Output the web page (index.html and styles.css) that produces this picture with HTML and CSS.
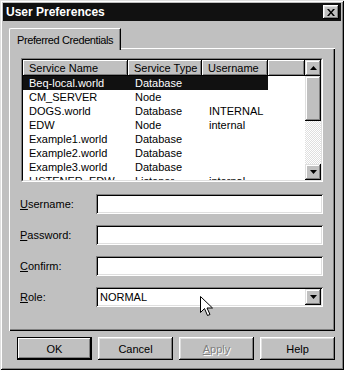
FILE: index.html
```html
<!DOCTYPE html>
<html lang="en">
  <head>
    <meta charset="UTF-8" />
    <title>User Preferences</title>
    <link rel="stylesheet" href="styles.css">
  </head>
  <body>
    <div class="window">
      <div class="titlebar">
        <span class="title">User Preferences</span>
        <button class="close-btn">
          <svg width="8" height="7" viewBox="0 0 8 7">
            <path d="M0 0h2l2 2.5L6 0h2L5 3.5 8 7H6L4 4.5 2 7H0l3-3.5z" fill="#000" />
          </svg>
        </button>
      </div>

      <div class="content">
        <div class="tabs">
          <div class="tab">Preferred Credentials</div>
        </div>

        <div class="panel">
          <div class="listbox">
            <div class="listbox-inner">
              <div class="list-main">
                <div class="list-header">
                  <div class="hcell col-name">Service Name</div>
                  <div class="hcell col-type">Service Type</div>
                  <div class="hcell col-user">Username</div>
                  <div class="hcell col-rest"></div>
                </div>
                <div class="list-rows">
                  <div class="row selected"><span class="col-name">Beq-local.world</span><span class="col-type">Database</span><span class="col-user"></span></div>
                  <div class="row"><span class="col-name">CM_SERVER</span><span class="col-type">Node</span><span class="col-user"></span></div>
                  <div class="row"><span class="col-name">DOGS.world</span><span class="col-type">Database</span><span class="col-user">INTERNAL</span></div>
                  <div class="row"><span class="col-name">EDW</span><span class="col-type">Node</span><span class="col-user">internal</span></div>
                  <div class="row"><span class="col-name">Example1.world</span><span class="col-type">Database</span><span class="col-user"></span></div>
                  <div class="row"><span class="col-name">Example2.world</span><span class="col-type">Database</span><span class="col-user"></span></div>
                  <div class="row"><span class="col-name">Example3.world</span><span class="col-type">Database</span><span class="col-user"></span></div>
                  <div class="row"><span class="col-name">LISTENER_EDW</span><span class="col-type">Listener</span><span class="col-user">internal</span></div>
                </div>
              </div>
              <div class="scrollbar">
                <div class="sb-btn">
                  <svg width="7" height="4" viewBox="0 0 7 4"><path d="M3.5 0L7 4H0z" fill="#000" /></svg>
                </div>
                <div class="sb-thumb"></div>
                <div class="sb-track"></div>
                <div class="sb-btn">
                  <svg width="7" height="4" viewBox="0 0 7 4"><path d="M0 0h7L3.5 4z" fill="#000" /></svg>
                </div>
              </div>
            </div>
          </div>

          <div class="form">
            <label class="field-label"><u>U</u>sername:</label>
            <div class="field"></div>
            <label class="field-label"><u>P</u>assword:</label>
            <div class="field"></div>
            <label class="field-label"><u>C</u>onfirm:</label>
            <div class="field"></div>
            <label class="field-label"><u>R</u>ole:</label>
            <div class="field combo">
              <span class="combo-value">NORMAL</span>
              <div class="combo-btn">
                <svg width="7" height="4" viewBox="0 0 7 4"><path d="M0 0h7L3.5 4z" fill="#000" /></svg>
              </div>
              <!-- mouse pointer over the combo -->
              <svg class="cursor" width="13" height="21" viewBox="0 0 13 21">
                <path d="M0.5 0.5v16l4-4 3 7 2.5-1-3-6.5h5.5z" fill="#fff" stroke="#000" stroke-width="1" />
              </svg>
            </div>
          </div>
        </div>

        <div class="buttons">
          <button class="btn default">OK</button>
          <button class="btn">Cancel</button>
          <button class="btn disabled"><u>A</u>pply</button>
          <button class="btn">Help</button>
        </div>
      </div>
    </div>
  </body>
</html>
```

FILE: styles.css
```css
body {
  margin: 0;
  padding: 0;
  background-color: #c0c0c0;
  font-family: "Liberation Sans", Arial, sans-serif;
  font-size: 11px;
  color: #000;
}
.window {
  width: 344px;
  height: 370px;
  box-sizing: border-box;
  padding: 3px;
  background-color: #c0c0c0;
  box-shadow: inset 1px 1px #dfdfdf, inset -1px -1px #000,
    inset 2px 2px #fff, inset -2px -2px #808080;
}
.titlebar {
  height: 18px;
  display: flex;
  align-items: center;
  justify-content: space-between;
  padding: 0 2px 0 3px;
  background-color: #111;
  color: #fff;
}
.title {
  font-weight: bold;
  font-size: 12px;
}
.close-btn {
  width: 16px;
  height: 14px;
  padding: 0;
  border: none;
  display: flex;
  align-items: center;
  justify-content: center;
  background-color: #c0c0c0;
  box-shadow: inset -1px -1px #000, inset 1px 1px #fff,
    inset -2px -2px #808080, inset 2px 2px #dfdfdf;
}
.content {
  padding: 7px 6px 0 6px;
}
.tabs {
  display: flex;
  position: relative;
  z-index: 1;
}
.tab {
  height: 22px;
  box-sizing: border-box;
  margin-bottom: -2px;
  padding: 5px 7px 0 7px;
  white-space: nowrap;
  letter-spacing: -0.4px;
  background-color: #c0c0c0;
  border-top: 1px solid #fff;
  border-left: 1px solid #fff;
  border-right: 1px solid #000;
  border-top-left-radius: 2px;
  box-shadow: inset -1px 0 #808080;
}
.panel {
  padding: 10px 12px 24px 12px;
  box-shadow: inset 1px 1px #fff, inset -1px -1px #000,
    inset -2px -2px #808080;
}
.listbox {
  height: 124px;
  box-sizing: border-box;
  border: 1px solid;
  border-color: #808080 #fff #fff #808080;
}
.listbox-inner {
  height: 100%;
  box-sizing: border-box;
  border: 1px solid;
  border-color: #000 #dfdfdf #dfdfdf #000;
  display: flex;
  background-color: #fff;
}
.list-main {
  flex: 1;
  display: flex;
  flex-direction: column;
  overflow: hidden;
}
.list-header {
  display: flex;
  height: 16px;
  flex-shrink: 0;
}
.hcell {
  box-sizing: border-box;
  padding: 2px 0 0 6px;
  background-color: #c0c0c0;
  box-shadow: inset -1px -1px #000, inset 1px 1px #fff,
    inset -2px -2px #808080;
  white-space: nowrap;
  overflow: hidden;
}
.col-name {
  width: 105px;
}
.col-type {
  width: 74px;
}
.col-user {
  width: 66px;
}
.col-rest {
  flex: 1;
}
.list-rows {
  flex: 1;
  overflow: hidden;
}
.row {
  display: flex;
  width: 245px;
  height: 14px;
  line-height: 14px;
  white-space: nowrap;
}
.row span {
  box-sizing: border-box;
  padding-left: 6px;
  overflow: hidden;
}
.row .col-type,
.row .col-user {
  padding-left: 7px;
}
.row.selected {
  background-color: #111;
  color: #fff;
}
.scrollbar {
  width: 16px;
  display: flex;
  flex-direction: column;
}
.sb-btn {
  height: 16px;
  flex-shrink: 0;
  display: flex;
  align-items: center;
  justify-content: center;
  background-color: #c0c0c0;
  box-shadow: inset -1px -1px #000, inset 1px 1px #dfdfdf,
    inset -2px -2px #808080, inset 2px 2px #fff;
}
.sb-thumb {
  height: 45px;
  flex-shrink: 0;
  background-color: #c0c0c0;
  box-shadow: inset -1px -1px #000, inset 1px 1px #dfdfdf,
    inset -2px -2px #808080, inset 2px 2px #fff;
}
.sb-track {
  flex: 1;
  background: repeating-conic-gradient(#dfdfdf 0 25%, #fff 0 50%) 0 0 / 2px 2px;
}
.form {
  display: grid;
  grid-template-columns: 75px 1fr;
  row-gap: 11px;
  margin-top: 12px;
}
.field-label {
  align-self: center;
  margin-left: -1px;
}
.field {
  height: 20px;
  background-color: #fff;
  box-shadow: inset 1px 1px #808080, inset -1px -1px #fff,
    inset 2px 2px #000, inset -2px -2px #dfdfdf;
}
.combo {
  position: relative;
  display: flex;
  align-items: center;
  justify-content: space-between;
  padding: 0 2px 0 4px;
}
.combo-btn {
  width: 16px;
  height: 16px;
  display: flex;
  align-items: center;
  justify-content: center;
  background-color: #c0c0c0;
  box-shadow: inset -1px -1px #000, inset 1px 1px #dfdfdf,
    inset -2px -2px #808080, inset 2px 2px #fff;
}
.cursor {
  position: absolute;
  left: 104px;
  top: 9px;
}
.buttons {
  display: flex;
  justify-content: flex-end;
  gap: 6px;
  margin-top: 6px;
}
.btn {
  width: 75px;
  height: 23px;
  padding: 0;
  border: none;
  font-family: "Liberation Sans", Arial, sans-serif;
  font-size: 11px;
  color: #000;
  background-color: #c0c0c0;
  box-shadow: inset -1px -1px #000, inset 1px 1px #fff,
    inset -2px -2px #808080, inset 2px 2px #dfdfdf;
}
.btn.default {
  box-shadow: inset 0 0 0 1px #000, inset -2px -2px #000,
    inset 2px 2px #fff, inset -3px -3px #808080;
}
.btn.disabled {
  color: #808080;
  text-shadow: 1px 1px #fff;
}
```
